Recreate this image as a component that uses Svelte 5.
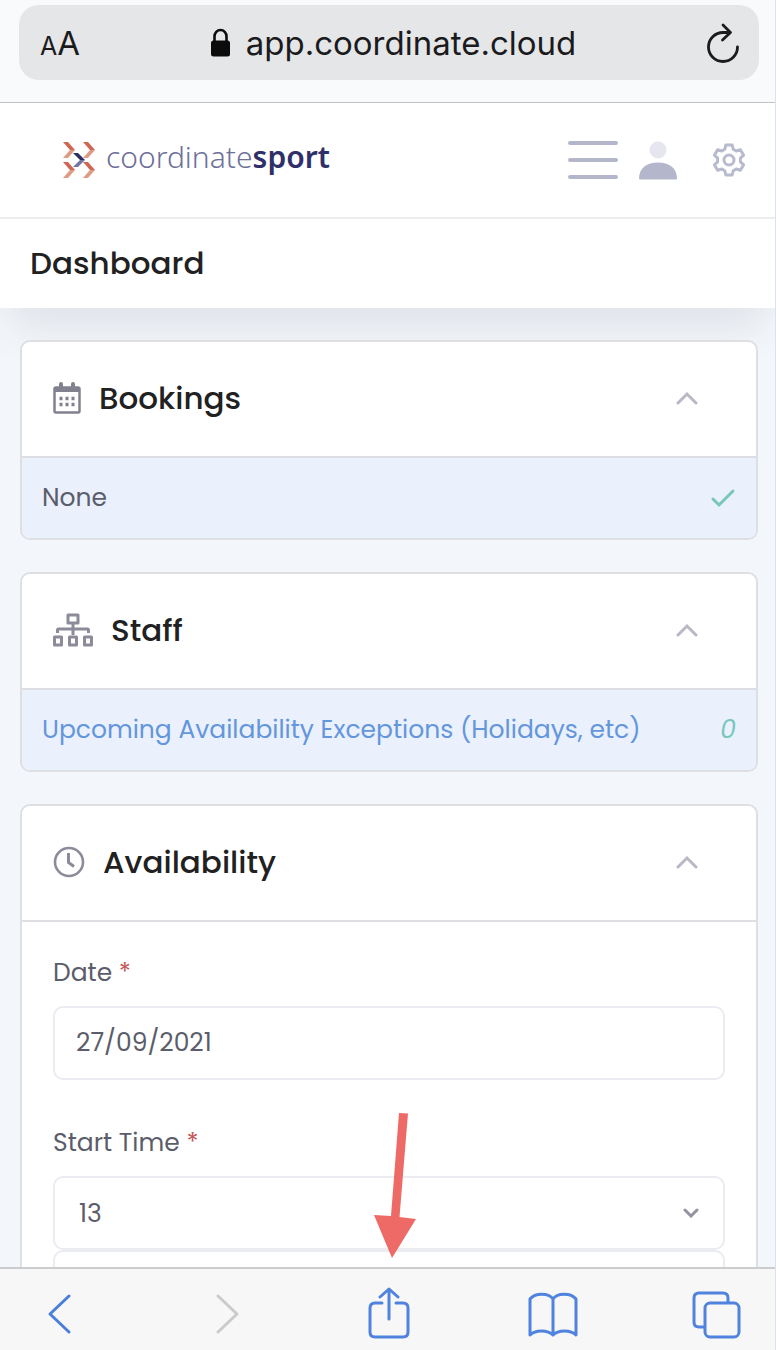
<script>
  let date = '27/09/2021';
  let hour = '13';
  let minute = '00';
  let open = {bookings: true, staff: true, availability: true};

  const hours = Array.from({length: 24}, (_, i) => String(i).padStart(2, '0'));
  const minutes = ['00', '15', '30', '45'];

  function toggle(key) {
    open = {...open, [key]: !open[key]};
  }
</script>

<div class="phone">
  <div class="address-bar">
    <div class="address">
      <button class="text-size" aria-label="Text size"><span class="small">A</span><span>A</span></button>
      <div class="url">
        <svg width="21" height="30" viewBox="0 0 21 30">
          <path d="M4.500 14V8.500a6 6.500 0 0 1 12 0V14" fill="none" stroke="#0c0c0d" stroke-width="2.600"/>
          <rect x="1" y="12.500" width="19" height="16" rx="2.500" fill="#0c0c0d"/>
        </svg>
        <span>app.coordinate.cloud</span>
      </div>
      <button aria-label="Reload">
        <svg width="34" height="40" viewBox="0 0 34 40" fill="none" stroke="#1b1b1d" stroke-width="2.800" stroke-linecap="round" stroke-linejoin="round">
          <path d="M23 9.500H17a14.500 14.500 0 1 0 14.500 14.500"/>
          <path d="M17 2l7.500 7.500-8 7.500"/>
        </svg>
      </button>
    </div>
  </div>

  <header class="site-header">
    <a class="logo" href="/" aria-label="coordinatesport">
      <svg width="34" height="38" viewBox="0 0 34 38">
        <g fill="#cf6654">
          <path d="M1 1h5l7 8h-5z"/>
          <path d="M21 1h5l7 8h-5z"/>
          <path d="M1 21h5l7 8h-5z"/>
          <path d="M21 21h5l7 8h-5z"/>
        </g>
        <g fill="#df9b84">
          <path d="M1 17h5l7-8h-5z"/>
          <path d="M21 17h5l7-8h-5z"/>
          <path d="M1 37h5l7-8h-5z"/>
          <path d="M21 37h5l7-8h-5z"/>
        </g>
        <path d="M11 12h5l7 7h-5z" fill="#2b2d63"/>
        <path d="M11 26h5l7-7h-5z" fill="#7377a5"/>
      </svg>
      <span class="logo-text">coordinate<b>sport</b></span>
    </a>
    <nav>
      <button aria-label="Menu">
        <svg width="50" height="40" viewBox="0 0 50 40" stroke="#b4b7ca" stroke-width="4" stroke-linecap="round">
          <path d="M2 3h46M2 20h46M2 37h46"/>
        </svg>
      </button>
      <button aria-label="Profile">
        <svg width="38" height="40" viewBox="0 0 38 40">
          <circle cx="19" cy="10" r="8.500" fill="#e6e7ee"/>
          <path d="M0 38.500C0 28 8 22.500 19 22.500S38 28 38 38.500q0 1-1 1H1q-1 0-1-1z" fill="#b4b7cc"/>
        </svg>
      </button>
      <button class="settings" aria-label="Settings">
        <svg width="34" height="34" viewBox="0 0 34 34" fill="none" stroke="#b8bbcd" stroke-width="3" stroke-linejoin="round">
          <path d="M13.800 2h6.400l1 4.300 3 1.700 4.200-1.300 3.200 5.500-3.200 3v3.600l3.200 3-3.200 5.500-4.200-1.300-3 1.700-1 4.300h-6.400l-1-4.300-3-1.700-4.200 1.300-3.200-5.500 3.200-3v-3.600l-3.200-3 3.200-5.500L9.800 8l3-1.700z"/>
          <circle cx="17" cy="17" r="5"/>
        </svg>
      </button>
    </nav>
  </header>

  <div class="page-title">
    <h1>Dashboard</h1>
  </div>

  <main>
    <section class="card">
      <div class="card-header">
        <svg width="28" height="32" viewBox="0 0 28 32">
          <path d="M8 2v5M20 2v5" stroke="#82818f" stroke-width="4" stroke-linecap="round"/>
          <rect x="1.500" y="5.500" width="25" height="25" rx="1.500" fill="none" stroke="#82818f" stroke-width="2.500"/>
          <path d="M1 5h26v5H1z" fill="#82818f"/>
          <path d="M6.500 16.500h3M12.500 16.500h3M18.500 16.500h3M6.500 22.500h3M12.500 22.500h3M18.500 22.500h3" stroke="#82818f" stroke-width="3.500"/>
        </svg>
        <h2>Bookings</h2>
        <button aria-label="Toggle bookings" on:click={() => toggle('bookings')}>
          <svg class:closed={!open.bookings} width="22" height="14" viewBox="0 0 22 14"><path d="M2 12l9-9 9 9" fill="none" stroke="#b9b8c5" stroke-width="3" stroke-linecap="round"/></svg>
        </button>
      </div>
      {#if open.bookings}
        <div class="row">
          <span>None</span>
          <svg width="26" height="20" viewBox="0 0 26 20"><path d="M3 11l6 6L23 3" fill="none" stroke="#79c6bd" stroke-width="3" stroke-linecap="round"/></svg>
        </div>
      {/if}
    </section>

    <section class="card">
      <div class="card-header">
        <svg width="40" height="34" viewBox="0 0 40 34" fill="none" stroke="#8c8b99" stroke-width="3" stroke-linejoin="round">
          <rect x="15" y="2" width="10" height="8"/>
          <path d="M20 10v12M4.500 20v-3q0-1 1-1h29q1 0 1 1v3"/>
          <rect x="1.500" y="24" width="7" height="8"/>
          <rect x="16.500" y="24" width="7" height="8"/>
          <rect x="31.500" y="24" width="7" height="8"/>
        </svg>
        <h2>Staff</h2>
        <button aria-label="Toggle staff" on:click={() => toggle('staff')}>
          <svg class:closed={!open.staff} width="22" height="14" viewBox="0 0 22 14"><path d="M2 12l9-9 9 9" fill="none" stroke="#b9b8c5" stroke-width="3" stroke-linecap="round"/></svg>
        </button>
      </div>
      {#if open.staff}
        <div class="row">
          <a href="/availability/exceptions">Upcoming Availability Exceptions (Holidays, etc)</a>
          <em>0</em>
        </div>
      {/if}
    </section>

    <section class="card">
      <div class="card-header">
        <svg width="32" height="32" viewBox="0 0 32 32" fill="none" stroke="#8c8b99" stroke-width="2.600">
          <circle cx="16" cy="16" r="14"/>
          <path d="M15.500 7v9.500l5.500 4" stroke-width="3"/>
        </svg>
        <h2>Availability</h2>
        <button aria-label="Toggle availability" on:click={() => toggle('availability')}>
          <svg class:closed={!open.availability} width="22" height="14" viewBox="0 0 22 14"><path d="M2 12l9-9 9 9" fill="none" stroke="#b9b8c5" stroke-width="3" stroke-linecap="round"/></svg>
        </button>
      </div>
      {#if open.availability}
        <form>
          <div class="field">
            <label for="date">Date <span class="required">*</span></label>
            <input id="date" type="text" bind:value={date}/>
          </div>
          <div class="field">
            <label for="hour">Start Time <span class="required">*</span></label>
            <div class="select">
              <select id="hour" bind:value={hour}>
                {#each hours as h}
                  <option value={h}>{h}</option>
                {/each}
              </select>
              <svg width="16" height="10" viewBox="0 0 16 10"><path d="M2 2l6 6 6-6" fill="none" stroke="#94939f" stroke-width="3" stroke-linecap="round"/></svg>
            </div>
            <div class="select">
              <select aria-label="Start minute" bind:value={minute}>
                {#each minutes as m}
                  <option value={m}>{m}</option>
                {/each}
              </select>
            </div>
          </div>
        </form>
      {/if}
    </section>
  </main>

  <div class="toolbar">
    <button aria-label="Back">
      <svg width="50" height="54" viewBox="0 0 50 54"><path d="M34 9L15 27l19 18" fill="none" stroke="#4a7fdc" stroke-width="3" stroke-linecap="round" stroke-linejoin="round"/></svg>
    </button>
    <button aria-label="Forward" disabled>
      <svg width="50" height="54" viewBox="0 0 50 54"><path d="M19 9l19 18-19 18" fill="none" stroke="#cbcbcc" stroke-width="3" stroke-linecap="round" stroke-linejoin="round"/></svg>
    </button>
    <button aria-label="Share">
      <svg width="50" height="54" viewBox="0 0 50 54" fill="none" stroke="#4f83dd" stroke-width="3" stroke-linecap="round" stroke-linejoin="round">
        <path d="M18 16h-7q-5 0-5 5v24q0 5 5 5h28q5 0 5-5V21q0-5-5-5h-7"/>
        <path d="M25 32V2M16 10l9-8 9 8"/>
      </svg>
    </button>
    <button aria-label="Bookmarks">
      <svg width="50" height="54" viewBox="0 0 50 54" fill="none" stroke="#4f83dd" stroke-width="3" stroke-linecap="round" stroke-linejoin="round">
        <path d="M25 48V12C21 5.500 7 5.500 2 12v36c5-5.500 18-5.500 23 0 5-5.500 18-5.500 23 0V12C43 5.500 29 5.500 25 12"/>
      </svg>
    </button>
    <button aria-label="Tabs">
      <svg width="50" height="54" viewBox="0 0 50 54" fill="none" stroke="#4f83dd" stroke-width="3" stroke-linejoin="round">
        <path d="M13 40H7q-5 0-5-5V11q0-5 5-5h24q5 0 5 5v5"/>
        <rect x="13" y="16" width="34" height="34" rx="5"/>
      </svg>
    </button>
  </div>

  <svg class="pointer" width="42" height="145" viewBox="0 0 42 145">
    <path d="M25 0l9 .5L25.500 104l16.500 2L18 145 0 102l17 1z" fill="#ed6a66"/>
  </svg>
</div>

<style>
  :global(body) {
    margin: 0;
  }

  .phone {
    position: relative;
    display: flex;
    flex-direction: column;
    height: 100vh;
    box-sizing: border-box;
    overflow: hidden;
    border-right: 1px solid #dfe1e8;
    background-color: #f3f7fb;
    color: #5b5d6b;
    font-family: Poppins, Inter, sans-serif;
    font-size: 25px;
  }

  button {
    display: flex;
    padding: 0;
    border: none;
    background: none;
    color: inherit;
    font: inherit;
    cursor: pointer;
  }

  a {
    color: #6496dc;
    text-decoration: none;
  }

  .address-bar {
    flex: none;
    padding: 5px 16px 22px 19px;
    border-bottom: 1px solid #c2c3c5;
    background-color: #f9fafc;
  }

  .address {
    display: flex;
    justify-content: space-between;
    align-items: center;
    height: 75px;
    padding: 0 19px 0 21px;
    border-radius: 20px;
    background-color: #e5e6e8;
    color: #1b1b1d;
    font-family: Inter, sans-serif;
    font-size: 33px;
  }

  .text-size {
    align-items: baseline;
  }

  .text-size .small {
    font-size: 25px;
  }

  .url {
    display: flex;
    align-items: center;
    gap: 15px;
  }

  .site-header {
    display: flex;
    flex: none;
    justify-content: space-between;
    align-items: center;
    height: 114px;
    padding: 0 29px 0 62px;
    border-bottom: 2px solid #ededef;
    background-color: #fff;
  }

  .logo {
    display: flex;
    align-items: center;
    gap: 10px;
    color: #6e6f9b;
    font-family: "Noto Sans", sans-serif;
    font-size: 30px;
    font-weight: 300;
  }

  .logo-text {
    padding-bottom: 8px;
  }

  .logo b {
    color: #2f3069;
    font-weight: 600;
  }

  nav {
    display: flex;
    align-items: center;
    gap: 21px;
  }

  .settings {
    margin-left: 14px;
  }

  .page-title {
    flex: none;
    padding: 22px 30px;
    background-color: #fff;
    box-shadow: 0 30px 40px -10px rgba(60, 55, 75, 0.1);
  }

  h1,
  h2 {
    margin: 0;
    color: #212122;
    font-size: 31px;
    font-weight: 500;
    line-height: 45px;
  }

  main {
    display: flex;
    flex: 1;
    flex-direction: column;
    gap: 32px;
    min-height: 0;
    padding: 32px 17px 0 20px;
    overflow: hidden;
  }

  .card {
    flex: none;
    border: 2px solid #dedfe2;
    border-radius: 10px;
    overflow: hidden;
    background-color: #fff;
  }

  .card-header {
    display: flex;
    align-items: center;
    gap: 18px;
    height: 112px;
    padding: 0 58px 2px 31px;
  }

  .card-header button {
    margin-left: auto;
  }

  .closed {
    transform: rotate(180deg);
  }

  .row {
    display: flex;
    justify-content: space-between;
    align-items: center;
    height: 80px;
    padding: 0 20px;
    border-top: 2px solid #dcdee3;
    background-color: #eaf1fd;
  }

  .row em {
    color: #79c6bd;
  }

  form {
    display: flex;
    flex-direction: column;
    gap: 43px;
    padding: 31px;
    border-top: 2px solid #dedfe2;
  }

  .field {
    display: flex;
    flex-direction: column;
  }

  label {
    margin-bottom: 13px;
    line-height: 40px;
  }

  .required {
    color: #c4565a;
  }

  input,
  select {
    display: block;
    width: 100%;
    height: 74px;
    box-sizing: border-box;
    padding: 0 21px;
    border: 2px solid #ebecf1;
    border-radius: 10px;
    background-color: #fff;
    color: #5b5d6b;
    font: inherit;
    appearance: none;
  }

  select {
    padding: 0 24px;
  }

  .select {
    position: relative;
  }

  .select svg {
    position: absolute;
    top: 32px;
    right: 26px;
    pointer-events: none;
  }

  .toolbar {
    display: flex;
    flex: none;
    justify-content: space-between;
    align-items: center;
    height: 73px;
    padding: 8px 33px 0 35px;
    border-top: 2px solid #cbccce;
    background-color: #f7f7f8;
  }

  .pointer {
    position: absolute;
    bottom: 92px;
    left: 50%;
    margin-left: -14px;
    pointer-events: none;
  }
</style>
